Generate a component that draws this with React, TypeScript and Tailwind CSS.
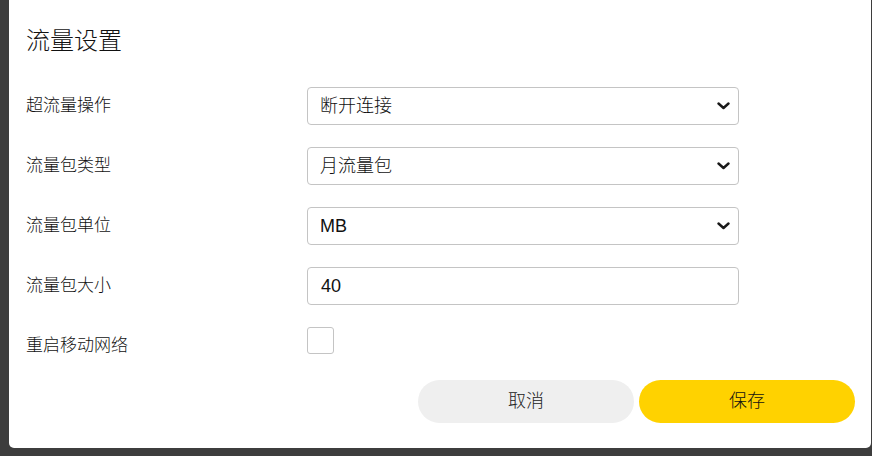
import React from 'react';

const font = { fontFamily: '"Liberation Sans", "Noto Sans CJK SC", sans-serif' };

const Chevron = () => (
  <svg width="13" height="8" viewBox="0 0 13 8" fill="none" className="shrink-0">
    <path d="M1.5 1.5 L6.5 6 L11.5 1.5" stroke="#1a1a1a" strokeWidth="2.4" strokeLinecap="round" strokeLinejoin="round" />
  </svg>
);

const SelectBox = ({ value }: { value: string }) => (
  <div className="flex items-center justify-between w-[432px] h-[38px] pl-[12px] pr-[8px] border border-[#c4c4c4] rounded-[4px] bg-white text-[18px] text-[#111]">
    <span>{value}</span>
    <Chevron />
  </div>
);

const Row = ({ label, children }: { label: string; children: React.ReactNode }) => (
  <div className="flex items-center h-[38px]">
    <div className="w-[281px] text-[17px] text-[#111]">{label}</div>
    {children}
  </div>
);

export default function App() {
  return (
    <div className="w-[872px] h-[456px] bg-[#3d3d3d] overflow-hidden font-light" style={font}>
      <div className="ml-[9px] w-[862px] h-[448px] bg-white rounded-b-[5px] pt-[23px] pl-[17px] pr-[16px]">
        <h2 className="h-9 leading-9 text-[24px] text-[#111]">流量设置</h2>
        <div className="mt-[28px] flex flex-col gap-[22px]">
          <Row label="超流量操作">
            <SelectBox value="断开连接" />
          </Row>
          <Row label="流量包类型">
            <SelectBox value="月流量包" />
          </Row>
          <Row label="流量包单位">
            <SelectBox value="MB" />
          </Row>
          <Row label="流量包大小">
            <div className="flex items-center w-[432px] h-[38px] pl-[13px] border border-[#c4c4c4] rounded-[4px] text-[18px] text-[#111]">
              40
            </div>
          </Row>
          <div className="flex items-start h-[38px]">
            <div className="w-[281px] h-[38px] flex items-center text-[17px] text-[#111]">重启移动网络</div>
            <div className="w-[27px] h-[27px] border border-[#c4c4c4] rounded-[3px] bg-white" />
          </div>
        </div>
        <div className="mt-[15px] flex justify-end gap-[5px]">
          <button className="w-[216px] h-[43px] rounded-full bg-[#efefef] text-[18px] text-[#222]">取消</button>
          <button className="w-[216px] h-[43px] rounded-full bg-[#ffd200] text-[18px] text-[#111]">保存</button>
        </div>
      </div>
    </div>
  );
}
